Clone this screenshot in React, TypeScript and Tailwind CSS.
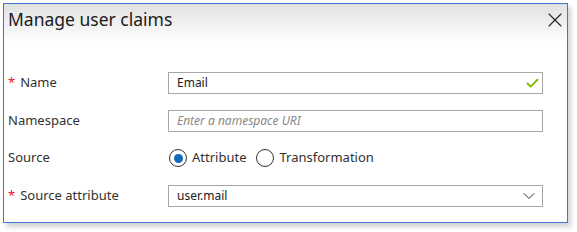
import { Check, ChevronDown, X } from "lucide-react";

const font = { fontFamily: '"Noto Sans", "Open Sans", sans-serif' };

function Label({ text, required }: { text: string; required?: boolean }) {
  return (
    <div className="w-[164px] shrink-0 pl-[4px] text-[13px] text-[#323130]">
      {required && <span className="mr-[5px] text-[#e81123]">*</span>}
      {text}
    </div>
  );
}

function Radio({ label, checked }: { label: string; checked?: boolean }) {
  return (
    <label className="flex items-center gap-[5px]">
      <span className="flex h-[18px] w-[18px] items-center justify-center rounded-full border border-[#333]">
        {checked && <span className="h-[9px] w-[9px] rounded-full bg-[#0f6cbd]" />}
      </span>
      <span className="text-[13px] text-[#323130]">{label}</span>
    </label>
  );
}

export default function App() {
  return (
    <div className="h-[232px] w-[577px] bg-white p-[3px]" style={font}>
      <div className="h-[220px] w-[565px] border border-[#3f76d2] bg-white shadow-[3px_4px_5px_rgba(0,0,0,0.18)]">
        <div className="flex h-[60px] items-start justify-between bg-[linear-gradient(to_bottom,#e1e1e1,#ffffff_38px)] pl-[4px] pr-[0px] pt-[3px]">
          <h1 className="text-[17.5px] leading-[24px] text-[#1b1b1b]">Manage user claims</h1>
          <X className="mt-[1px] h-[24px] w-[24px] text-[#222]" strokeWidth={1.1} />
        </div>

        <div className="flex h-[38px] items-center">
          <Label text="Name" required />
          <div className="flex h-[22px] w-[375px] items-center justify-between border border-[#a6a6a6] pl-[8px] pr-[2px] text-[12px] text-[#222]">
            <span>Email</span>
            <Check className="h-[15px] w-[15px] text-[#7fba00]" strokeWidth={3} />
          </div>
        </div>

        <div className="flex h-[38px] items-center">
          <Label text="Namespace" />
          <div className="flex h-[22px] w-[375px] items-center border border-[#a6a6a6] pl-[8px] text-[12px] italic text-[#8a8886]">
            Enter a namespace URI
          </div>
        </div>

        <div className="flex h-[36px] items-center">
          <Label text="Source" />
          <div className="flex items-center gap-[10px] pl-[1px]">
            <Radio label="Attribute" checked />
            <Radio label="Transformation" />
          </div>
        </div>

        <div className="flex h-[40px] items-center">
          <Label text="Source attribute" required />
          <div className="flex h-[22px] w-[375px] items-center justify-between border border-[#a6a6a6] pl-[8px] pr-[3px] text-[12px] text-[#222]">
            <span>user.mail</span>
            <ChevronDown className="h-[20px] w-[20px] text-[#333]" strokeWidth={1.2} />
          </div>
        </div>
      </div>
    </div>
  );
}
